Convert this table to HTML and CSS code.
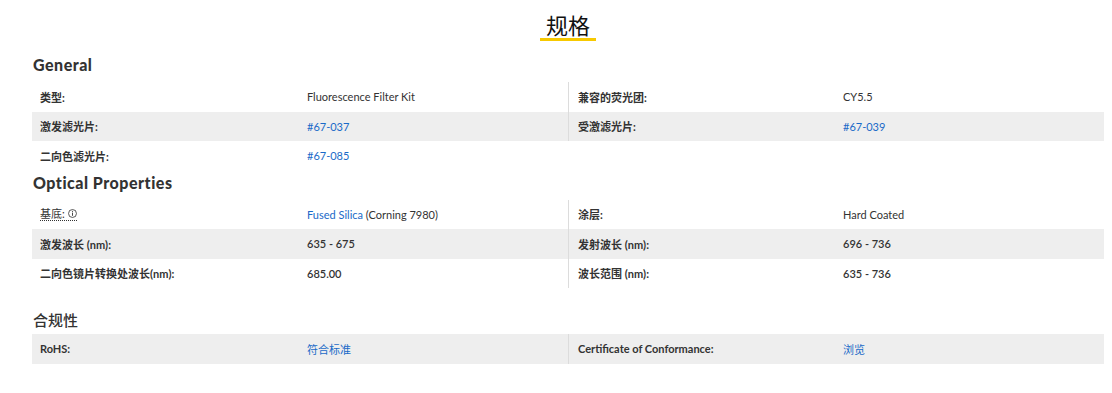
FILE: index.html
```html
<!DOCTYPE html>
<html lang="zh">
<head>
<meta charset="utf-8">
<title>规格</title>
<link rel="stylesheet" href="styles.css">
</head>
<body>
<div class="page">
  <div class="title-wrap"><h1 class="title">规格</h1></div>

  <h2 class="section">General</h2>
  <div class="table">
    <div class="row">
      <div class="cell label">类型:</div>
      <div class="cell value">Fluorescence Filter Kit</div>
      <div class="cell label right">兼容的荧光团:</div>
      <div class="cell value">CY5.5</div>
    </div>
    <div class="row alt">
      <div class="cell label">激发滤光片:</div>
      <div class="cell value"><a class="link">#67-037</a></div>
      <div class="cell label right">受激滤光片:</div>
      <div class="cell value"><a class="link">#67-039</a></div>
    </div>
    <div class="row">
      <div class="cell label">二向色滤光片:</div>
      <div class="cell value"><a class="link">#67-085</a></div>
    </div>
  </div>

  <h2 class="section">Optical Properties</h2>
  <div class="table">
    <div class="row">
      <div class="cell label"><span class="tip">基底:&nbsp;<svg class="info" width="9" height="9" viewBox="0 0 10 10"><circle cx="5" cy="5" r="4.4" fill="none" stroke="#333" stroke-width="0.9"/><line x1="5" y1="4" x2="5" y2="7.6" stroke="#333" stroke-width="1"/><circle cx="5" cy="2.6" r="0.6" fill="#333"/></svg></span></div>
      <div class="cell value"><span><a class="link">Fused Silica</a> (Corning 7980)</span></div>
      <div class="cell label right">涂层:</div>
      <div class="cell value">Hard Coated</div>
    </div>
    <div class="row alt">
      <div class="cell label">激发波长 (nm):</div>
      <div class="cell value num">635 - 675</div>
      <div class="cell label right">发射波长 (nm):</div>
      <div class="cell value num">696 - 736</div>
    </div>
    <div class="row">
      <div class="cell label">二向色镜片转换处波长(nm):</div>
      <div class="cell value num">685.00</div>
      <div class="cell label right">波长范围 (nm):</div>
      <div class="cell value num">635 - 736</div>
    </div>
  </div>

  <h2 class="section cjk">合规性</h2>
  <div class="table">
    <div class="row alt">
      <div class="cell label">RoHS:</div>
      <div class="cell value"><a class="link">符合标准</a></div>
      <div class="cell label right">Certificate of Conformance:</div>
      <div class="cell value"><a class="link">浏览</a></div>
    </div>
  </div>
</div>
</body>
</html>
```

FILE: styles.css
```css
* { box-sizing: border-box; }
html, body { margin: 0; padding: 0; background: #fff; }
body {
  font-family: "Lato", "Noto Sans CJK SC", sans-serif;
  color: #333;
}
.page {
  padding: 0 8px 0 32px;
}
.title-wrap {
  display: flex;
  justify-content: center;
  padding-top: 10px;
}
.title {
  margin: 0;
  padding: 0 6px;
  font-family: "Noto Sans CJK SC", sans-serif;
  font-weight: 400;
  font-size: 22px;
  line-height: 28px;
  color: #111;
  border-bottom: 3px solid #f7c900;
}
.section {
  margin: 12px 0 0 1px;
  height: 29px;
  padding-bottom: 5px;
  font-size: 16px;
  font-weight: 900;
  line-height: 24px;
  color: #333;
  letter-spacing: 0.5px;
}
.table + .section { margin-top: 0; }
.section.cjk {
  margin-top: 17px;
  height: 29px;
  padding-bottom: 0;
  line-height: 29px;
  letter-spacing: 0;
  font-family: "Noto Sans CJK SC", sans-serif;
  font-weight: 500;
  font-size: 15px;
}
.table {
  display: flex;
  flex-direction: column;
}
.row {
  display: grid;
  grid-template-columns: 268px 268px 268px 268px;
  height: 29.5px;
  align-items: stretch;
}
.row.alt { background: #eeeeee; }
.cell {
  display: flex;
  align-items: center;
  font-size: 11px;
  white-space: nowrap;
}
.label {
  padding-left: 8px;
  font-weight: 700;
}
.label.right {
  border-left: 1px solid #dcdcdc;
  padding-left: 9px;
}
.value {
  padding-left: 7px;
  font-weight: 400;
}
.value.num { font-weight: 600; }
.link {
  color: #1a6ac8;
  text-decoration: none;
}
.tip {
  display: inline-flex;
  align-items: center;
  border-bottom: 1px dotted #333;
  font-weight: 400;
  line-height: 13px;
}
.info { display: block; }
```
